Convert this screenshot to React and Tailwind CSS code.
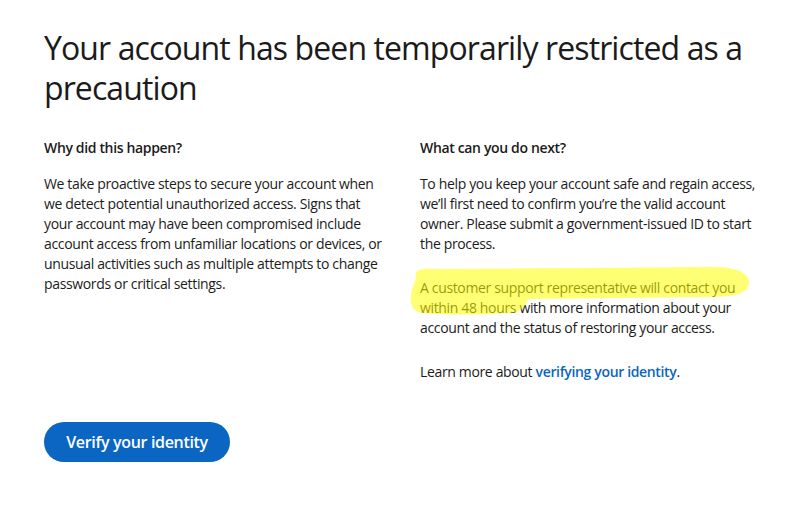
import React from "react";

function Highlight() {
  return (
    <svg
      className="pointer-events-none absolute left-[-12px] top-[-12px]"
      width="346"
      height="54"
      viewBox="0 0 346 54"
    >
      <path
        d="M8 10 C 6 4, 14 2, 30 3 L 300 1 C 325 0, 342 6, 341 17 C 340 28, 326 31, 300 31 L 120 33 C 118 40, 112 48, 100 47 C 70 49, 30 49, 14 47 C 4 45, 2 38, 3 30 C 3 22, 8 16, 8 10 Z"
        fill="#ffff00"
        fillOpacity="0.55"
      />
    </svg>
  );
}

export default function App() {
  const font = { fontFamily: '"Open Sans", "Noto Sans", sans-serif' };
  return (
    <div
      className="min-h-[506px] w-[792px] bg-white pl-[44px] pt-[28px] text-[#1b1b1b]"
      style={font}
    >
      <h1 className="text-[32px] font-normal leading-[40px] tracking-[-0.028em] text-[#1b1b1b]">
        Your account has been temporarily restricted as a
        <br />
        precaution
      </h1>

      <div className="mt-[30px] grid grid-cols-[340px_340px] gap-x-[36px] text-[14px] leading-[20px] tracking-[-0.025em]">
        <div>
          <h2 className="font-semibold">Why did this happen?</h2>
          <p className="mt-[16px] whitespace-nowrap">
            We take proactive steps to secure your account when
            <br />
            we detect potential unauthorized access. Signs that
            <br />
            your account may have been compromised include
            <br />
            account access from unfamiliar locations or devices, or
            <br />
            unusual activities such as multiple attempts to change
            <br />
            passwords or critical settings.
          </p>
        </div>
        <div>
          <h2 className="font-semibold">What can you do next?</h2>
          <p className="mt-[16px] whitespace-nowrap">
            To help you keep your account safe and regain access,
            <br />
            we’ll first need to confirm you’re the valid account
            <br />
            owner. Please submit a government-issued ID to start
            <br />
            the process.
          </p>
          <p className="relative mt-[24px] whitespace-nowrap">
            A customer support representative will contact you
            <br />
            within 48 hours with more information about your
            <br />
            account and the status of restoring your access.
            <Highlight />
          </p>
          <p className="mt-[24px] whitespace-nowrap">
            Learn more about{" "}
            <a href="#" className="font-semibold text-[#0a66c2]">
              verifying your identity
            </a>
            .
          </p>
        </div>
      </div>

      <button className="mt-[40px] flex h-[40px] w-[186px] items-center justify-center rounded-full bg-[#0a66c2] text-[16px] font-semibold tracking-[-0.02em] text-white">
        Verify your identity
      </button>
    </div>
  );
}
